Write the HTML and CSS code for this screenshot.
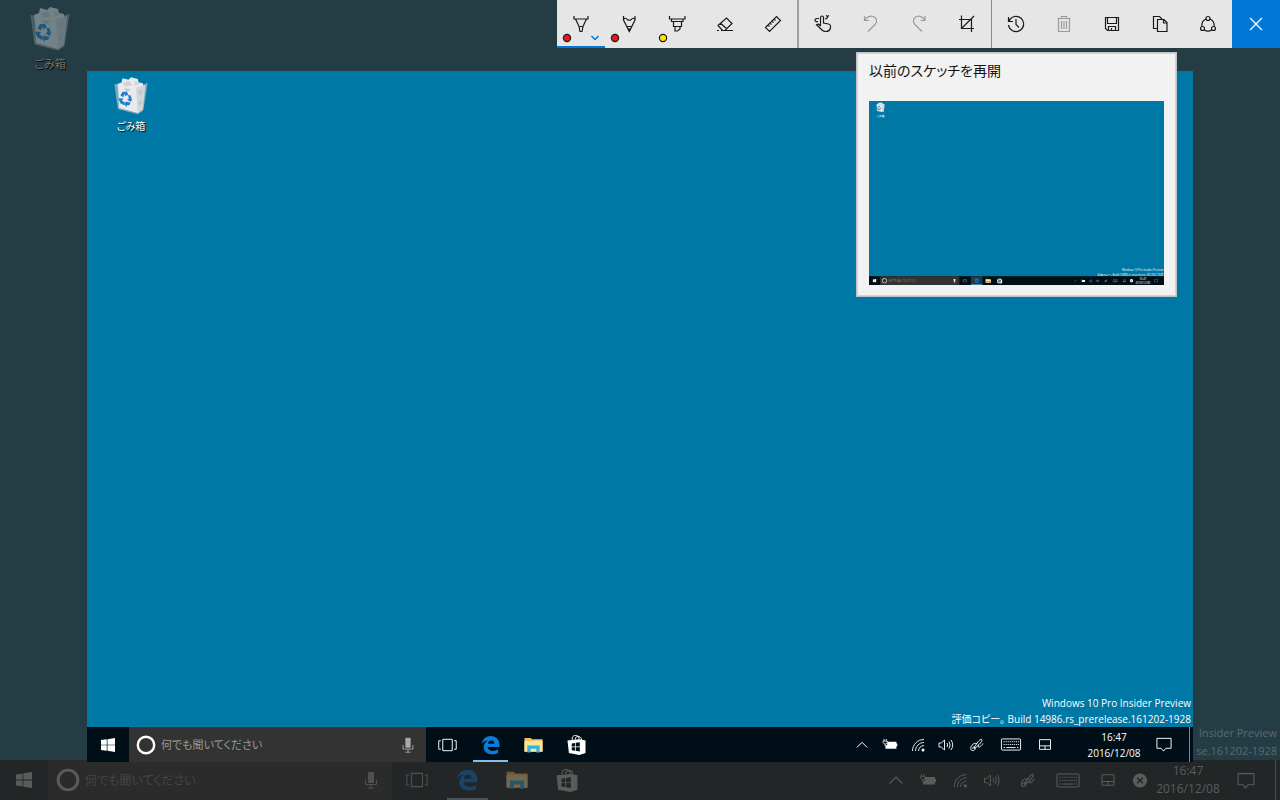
FILE: index.html
```
<!DOCTYPE html>
<html lang="ja">
<head>
    <meta charset="utf-8">
    <title>画面スケッチ</title>
    <link rel="stylesheet" href="styles.css">
</head>
<body>
    <!-- shared icons -->
    <svg class="defs" aria-hidden="true">
        <symbol id="bin" viewBox="0 0 40 46">
            <path d="M1 9 L26 12 L39 8 L34 40 L28 44 L5 38Z" fill="#d5dde2" fill-opacity=".5"/>
            <path d="M5 16 L4 9 L9 7 L10 2 L17 4 L20 1 L28 3 L29 7 L34 8 L35 20 L33 39 L28 43 L6 37Z" fill="#e8eaeb"/>
            <path d="M26 13 L37 10 L34 39 L28 43Z" fill="#d3d7d9"/>
            <path d="M10 8 L17 5 L22 10 L14 12Z M24 5 L30 8 L25 11Z" fill="#cfd4d6"/>
            <path d="M28 18 L34 14 L32 23Z M28 31 L33 27 L31 35Z M12 14 L20 15 L15 19Z" fill="#c3c8cb"/>
            <path d="M1 9 L5 38 L28 44 L34 40 L39 8" fill="none" stroke="#a9bcc5" stroke-width=".7"/>
            <path d="M7.5 22.5 L10 18 L15 18 L17 21.5 L13.5 23 L12 21 L11 24.5Z M16.5 22 L19.5 22 L21 27 L20 30 L15.5 27.5 L17.5 26Z M5 25.5 L11 26 L9.5 28.5 L13 30.5 L12 34 L7.5 31.5Z M14 29.5 L19.5 31 L18 34 L15 34 L14.5 36 L12.5 33Z" fill="#1c7fd0"/>
        </symbol>
        <symbol id="win" viewBox="0 0 16 16">
            <path d="M0 2.4 L6.6 1.4 V7.6 H0Z M7.4 1.3 L16 0 V7.6 H7.4Z M0 8.4 H6.6 V14.6 L0 13.6Z M7.4 8.4 H16 V16 L7.4 14.7Z" fill="currentColor"/>
        </symbol>
        <symbol id="cortana" viewBox="0 0 20 20">
            <circle cx="10" cy="10" r="8.2" fill="none" stroke="currentColor" stroke-width="2.4"/>
        </symbol>
        <symbol id="mic" viewBox="0 0 16 20">
            <rect x="5" y="2" width="6" height="11" rx="1" fill="currentColor"/>
            <path d="M2.5 10 V14.5 H13.5 V10 M8 14.5 V18 M5 18 H11" fill="none" stroke="currentColor"/>
        </symbol>
        <symbol id="taskview" viewBox="0 0 20 16">
            <path d="M5 2 H15 V14 H5Z M3 3.5 H.8 V12.5 H3 M17 3.5 H19.2 V12.5 H17" fill="none" stroke="currentColor"/>
        </symbol>
        <symbol id="edge" viewBox="0 0 20 20">
            <path d="M.8 8.8 C1.6 3.6 5.5 .6 10.2 .6 C16 .6 19.4 4.6 19.4 9.8 V12 H7 C7.2 15 9.6 16.2 12.4 16.2 C14.6 16.2 16.5 15.6 18 14.7 V18.4 C16.3 19.2 14.3 19.7 11.8 19.7 C6.3 19.7 2.9 16.5 2.9 12 C2.9 9 4.5 6.6 7.3 5.2 C4.6 5.3 2.3 6.6 .8 8.8Z M7.2 8.6 H14 C14 6.4 12.8 5.3 10.7 5.3 C8.8 5.3 7.5 6.7 7.2 8.6Z" fill="#0b7bdc" fill-rule="evenodd"/>
        </symbol>
        <symbol id="folder" viewBox="0 0 20 17">
            <path d="M.5 1 H7 L8.5 2.5 H19.5 V15.5 H.5Z" fill="#f2c04e"/>
            <path d="M.5 4 H19.5 V15.5 H.5Z" fill="#fde59a"/>
            <path d="M3.5 9 H16.5 V16.5 H13 V12.5 H7 V16.5 H3.5Z" fill="#37b0e3"/>
        </symbol>
        <symbol id="store" viewBox="0 0 20 22">
            <path d="M5.5 6 C5 2 7 .8 9.3 1 C12 1.2 12.8 3.5 12.8 5.5 M8.5 5.5 C8.8 2.5 10.5 1.6 12.5 2 C14.5 2.4 15.3 4 15.3 6" fill="none" stroke="currentColor"/>
            <path d="M.5 6.3 L13 5 L19.5 6.3 V19.5 L13 21.5 L2 19.5Z" fill="currentColor"/>
            <path d="M5 9.3 L8.4 8.8 V12.5 H5Z M9.2 8.7 L13.5 8.1 V12.5 H9.2Z M5 13.3 H8.4 V17 L5 16.5Z M9.2 13.3 H13.5 V17.8 L9.2 17.1Z" class="cut"/>
        </symbol>
        <symbol id="up" viewBox="0 0 12 12">
            <path d="M.8 8.5 L6 3.3 L11.2 8.5" fill="none" stroke="currentColor"/>
        </symbol>
        <symbol id="battery" viewBox="0 0 16 12">
            <path d="M5 3 H15 V5 H16 V8 H15 V10.5 H3 V7.5 L5 6Z" fill="currentColor"/>
            <path d="M1.5 0 V2 M4 0 V2 M.5 2.3 H5 V4 L3.5 5.5 H2 L.5 4Z M2.7 5.5 V8" fill="none" stroke="currentColor" stroke-width=".9"/>
        </symbol>
        <symbol id="wifi" viewBox="0 0 14 14">
            <path d="M1.5 13 C1.5 6.5 6.5 1.5 13 1.5 M4.5 13 C4.5 8.3 8.3 4.5 13 4.5 M7.5 13 C7.5 10 10 7.5 13 7.5" fill="none" stroke="currentColor" stroke-width=".9"/>
            <circle cx="12" cy="12" r="1.5" fill="currentColor"/>
        </symbol>
        <symbol id="volume" viewBox="0 0 16 14">
            <path d="M1 5 H3.2 L6.5 2 V12 L3.2 9 H1Z M9 5 Q10.3 7 9 9 M11 3.5 Q13.2 7 11 10.5 M13 2 Q16.4 7 13 12" fill="none" stroke="currentColor" stroke-width=".9"/>
        </symbol>
        <symbol id="ink" viewBox="0 0 14 14">
            <path d="M4.5 9 C7 5 9.5 1.5 11 1.3 C12.8 1.5 12 3.5 9 6.5 L5 10.3 L4 10.5Z M7 5.5 C3 4.5 .8 8 .8 10.5 C1 13.5 4.5 13 5 11 C5.5 8.5 3 8.5 2.5 10.5 M8.5 7 C8 9.5 9 10 10.3 8.5 C11.5 7 12.5 6 13.2 5.8" fill="none" stroke="currentColor"/>
        </symbol>
        <symbol id="keyboard" viewBox="0 0 22 14">
            <rect x=".7" y="1" width="20.6" height="12" rx="1" fill="none" stroke="currentColor"/>
            <path d="M3 4 H19.5 M3 7 H19.5" fill="none" stroke="currentColor" stroke-dasharray="1.2 1"/>
            <path d="M3 10.3 H4.5 M6 10.3 H16 M17.5 10.3 H19" fill="none" stroke="currentColor"/>
        </symbol>
        <symbol id="touchpad" viewBox="0 0 14 12">
            <path d="M1 .7 H13 V11.3 H1Z M1 7.5 H13 M7 7.5 V11.3" fill="none" stroke="currentColor"/>
        </symbol>
        <symbol id="offline" viewBox="0 0 16 16">
            <circle cx="8" cy="8" r="7.5" fill="currentColor"/>
            <path d="M5 5 L11 11 M11 5 L5 11" class="cross" stroke-width="1.5"/>
        </symbol>
        <symbol id="notice" viewBox="0 0 18 18">
            <path d="M1.5 2.5 H16.5 V13 H11 L8.5 16 L6 13 H1.5Z" fill="none" stroke="currentColor"/>
        </symbol>
    </svg>

    <!-- the dimmed desktop behind the sketch -->
    <div class="desktop dim">
        <div class="wall">
            <div class="shortcut">
                <svg class="bin"><use href="#bin"/></svg>
                <span>ごみ箱</span>
            </div>
            <p class="build">Insider Preview<br>se.161202-1928</p>
        </div>
        <div class="taskbar">
            <button class="start" aria-label="スタート"><svg><use href="#win"/></svg></button>
            <div class="search">
                <svg class="ring"><use href="#cortana"/></svg>
                <input type="text" placeholder="何でも聞いてください" aria-label="検索">
                <svg class="mic"><use href="#mic"/></svg>
            </div>
            <button class="task" aria-label="タスク ビュー"><svg><use href="#taskview"/></svg></button>
            <button class="task running" aria-label="Microsoft Edge"><svg><use href="#edge"/></svg></button>
            <button class="task" aria-label="エクスプローラー"><svg><use href="#folder"/></svg></button>
            <button class="task" aria-label="ストア"><svg class="store"><use href="#store"/></svg></button>
            <div class="tray">
                <svg class="up"><use href="#up"/></svg>
                <svg class="battery"><use href="#battery"/></svg>
                <svg><use href="#wifi"/></svg>
                <svg><use href="#volume"/></svg>
                <svg class="wide"><use href="#ink"/></svg>
                <svg class="wide keys"><use href="#keyboard"/></svg>
                <svg class="wide pad"><use href="#touchpad"/></svg>
                <svg class="offline"><use href="#offline"/></svg>
                <div class="clock">16:47<br>2016/12/08</div>
                <svg class="notice"><use href="#notice"/></svg>
                <div class="peek"></div>
            </div>
        </div>
    </div>

    <!-- sketch canvas -->
    <div class="desktop canvas">
        <div class="wall">
            <div class="shortcut">
                <svg class="bin"><use href="#bin"/></svg>
                <span>ごみ箱</span>
            </div>
            <p class="build">Windows 10 Pro Insider Preview<br>評価コピー。 Build 14986.rs_prerelease.161202-1928</p>
        </div>
        <div class="taskbar">
            <button class="start" aria-label="スタート"><svg><use href="#win"/></svg></button>
            <div class="search">
                <svg class="ring"><use href="#cortana"/></svg>
                <input type="text" placeholder="何でも聞いてください" aria-label="検索">
                <svg class="mic"><use href="#mic"/></svg>
            </div>
            <button class="task" aria-label="タスク ビュー"><svg><use href="#taskview"/></svg></button>
            <button class="task running" aria-label="Microsoft Edge"><svg><use href="#edge"/></svg></button>
            <button class="task" aria-label="エクスプローラー"><svg><use href="#folder"/></svg></button>
            <button class="task" aria-label="ストア"><svg class="store"><use href="#store"/></svg></button>
            <div class="tray">
                <svg class="up"><use href="#up"/></svg>
                <svg class="battery"><use href="#battery"/></svg>
                <svg><use href="#wifi"/></svg>
                <svg><use href="#volume"/></svg>
                <svg class="wide"><use href="#ink"/></svg>
                <svg class="wide keys"><use href="#keyboard"/></svg>
                <svg class="wide pad"><use href="#touchpad"/></svg>
                <div class="clock">16:47<br>2016/12/08</div>
                <svg class="notice"><use href="#notice"/></svg>
                <div class="peek"></div>
            </div>
        </div>
    </div>

    <div class="toolbar">
        <button class="tool active" aria-label="ボールペン">
            <svg viewBox="0 0 48 48">
                <path d="M17 16 V19 H31 V16 M18.5 19 L22 26.5 H26 L29.5 19 M22 26.5 L23 31.5 H25 L26 26.5"/>
                <circle class="red" cx="10" cy="38" r="3.6"/>
                <path class="more" d="M34.5 36 L38 39.5 L41.5 36"/>
            </svg>
        </button>
        <button class="tool" aria-label="鉛筆">
            <svg viewBox="0 0 48 48">
                <path d="M18.5 16 V20 L24.3 31.5 L30 20 V16 M18.5 19.5 Q20.5 17 22.3 19.5 Q24.3 21 26.3 19.5 Q28 17 30 19.5 M22 26.5 H26.6"/>
                <path d="M23.3 29 H25.3 L24.3 31Z" class="solid"/>
                <circle class="red" cx="10" cy="38" r="3.6"/>
            </svg>
        </button>
        <button class="tool" aria-label="蛍光ペン">
            <svg viewBox="0 0 48 48">
                <path d="M16.5 16 V19 H32 V16 M18.5 19 V21.5 H30 V19 M20.5 21.5 V26.5 H28.5 V21.5 M22 26.5 V31 H24.5 L27 29 V26.5"/>
                <circle class="yellow" cx="10" cy="38" r="3.6"/>
            </svg>
        </button>
        <button class="tool" aria-label="消しゴム">
            <svg viewBox="0 0 48 48"><path d="M17 25.5 L25.5 18 L31 23.5 L24 30.5 H21.5Z M19.5 23.3 L26 29 M16 30.5 H18 M20 30.5 H32"/></svg>
        </button>
        <button class="tool" aria-label="定規">
            <svg viewBox="0 0 48 48"><path d="M16.5 27.5 L27.5 16.5 L31.5 20.5 L20.5 31.5Z M19 25 L20.5 26.5 M21 23 L22.5 24.5 M23 21 L24.5 22.5 M25 19 L26.5 20.5"/></svg>
        </button>
        <span class="line thick"></span>
        <button class="tool" aria-label="タッチによる手書き">
            <svg viewBox="0 0 48 48"><path d="M21.5 26 V17.5 Q21.5 16 23 16 Q24.5 16 24.5 17.5 V23 L29.5 24 Q31.5 24.5 31.5 26 V28 Q30.5 31.5 27 31.5 Q24.5 31.5 23 30 L17.5 24.8 Q19 23.5 20 24.5 L21.5 26 M19 21.5 C15.5 22.5 15 18.5 18 18.5 H20 M26 18.5 C28 19.5 28.5 17.5 28.5 16.5 M30 15.5 L28.5 16.5 L27 15.5"/></svg>
        </button>
        <button class="tool" aria-label="元に戻す" disabled>
            <svg viewBox="0 0 48 48"><path d="M17.5 16 V20.5 H22 M17.5 20.5 C20 16 25 15 28 17.5 C30.5 19.7 29.8 22.8 28 24.5 L21 31.5"/></svg>
        </button>
        <button class="tool" aria-label="やり直し" disabled>
            <svg viewBox="0 0 48 48"><path d="M30 16 V20.5 H25.5 M30 20.5 C27.5 16 23 15 20 17.5 C17.5 19.7 18.2 22.8 20 24.5 L27 31.5"/></svg>
        </button>
        <button class="tool" aria-label="トリミング">
            <svg viewBox="0 0 48 48"><path d="M18.5 15.5 V28.5 H31 M16 19.5 H28.5 V32 M18.5 28.5 L31 16"/></svg>
        </button>
        <span class="line"></span>
        <button class="tool" aria-label="以前のスケッチを再開">
            <svg viewBox="0 0 48 48"><path d="M16.5 17 V21.5 H21 M17 21 A7.6 7.6 0 1 1 16.5 25 M24 19 V24.5 L27 27.5"/></svg>
        </button>
        <button class="tool" aria-label="すべて消去" disabled>
            <svg viewBox="0 0 48 48"><path d="M17.5 18.5 H30.5 M21.5 18.5 V16.5 H26.5 V18.5 M18.5 18.5 V31.5 H29.5 V18.5 M21.5 21 V29 M24 21 V29 M26.5 21 V29"/></svg>
        </button>
        <button class="tool" aria-label="名前を付けて保存">
            <svg viewBox="0 0 48 48"><path d="M17.5 17.5 H30.5 V30.5 H19.5 L17.5 28.5Z M19.5 17.5 V23.5 H28.5 V17.5 M20.5 30.5 V26.5 H27.5 V30.5 M23.5 28 V30.5"/></svg>
        </button>
        <button class="tool" aria-label="コピー">
            <svg viewBox="0 0 48 48"><path d="M21 28.5 H17.5 V16.5 H23.5 L26 19 M21.5 19.5 H28 L31 22.5 V31.5 H21.5Z M27.5 19.5 V23 H31"/></svg>
        </button>
        <button class="tool" aria-label="共有">
            <svg viewBox="0 0 48 48"><circle cx="24" cy="18.5" r="2"/><circle cx="18.5" cy="28.5" r="2"/><circle cx="29.5" cy="28.5" r="2"/><path d="M22 19 Q17.5 21 17.8 26.5 M26 19 Q30.5 21 30.2 26.5 M20.3 30 Q24 32.3 27.7 30"/></svg>
        </button>
        <button class="tool close" aria-label="閉じる">
            <svg viewBox="0 0 48 48"><path d="M18 18 L30 30 M30 18 L18 30"/></svg>
        </button>
    </div>

    <div class="resume">
        <h1>以前のスケッチを再開</h1>
        <svg class="thumb" viewBox="0 0 1280 800">
            <rect width="1280" height="800" fill="#0078a5"/>
            <use href="#bin" x="30" y="5" width="40" height="46"/>
            <text x="50" y="68" text-anchor="middle">ごみ箱</text>
            <text x="1276" y="738" text-anchor="end">Windows 10 Pro Insider Preview</text>
            <text x="1276" y="758" text-anchor="end">評価コピー。 Build 14986.rs_prerelease.161202-1928</text>
            <rect y="760" width="1280" height="40" fill="#000f17"/>
            <rect x="48" y="760" width="344" height="40" fill="#333"/>
            <rect x="442" y="760" width="50" height="40" fill="#223b48"/>
            <rect x="442" y="796" width="50" height="4" fill="#76b9ed"/>
            <use href="#win" x="16" y="772" width="16" height="16"/>
            <use href="#cortana" x="55" y="768" width="24" height="24"/>
            <text class="hint" x="85" y="785">何でも聞いてください</text>
            <use href="#mic" x="363" y="770" width="16" height="20"/>
            <use href="#taskview" x="406" y="772" width="20" height="16"/>
            <use href="#edge" x="457" y="770" width="20" height="20"/>
            <use href="#folder" x="505" y="770" width="24" height="20"/>
            <use href="#store" x="555" y="767" width="24" height="26"/>
            <use href="#up" x="890" y="774" width="12" height="12"/>
            <use href="#battery" x="920" y="773" width="18" height="14"/>
            <use href="#wifi" x="954" y="773" width="14" height="14"/>
            <use href="#volume" x="984" y="773" width="16" height="14"/>
            <use href="#ink" x="1021" y="773" width="14" height="14"/>
            <use href="#keyboard" x="1057" y="773" width="22" height="14"/>
            <use href="#touchpad" x="1101" y="774" width="14" height="12"/>
            <use href="#offline" x="1131" y="772" width="16" height="16"/>
            <text x="1188" y="776" text-anchor="middle">16:47</text>
            <text x="1188" y="795" text-anchor="middle">2016/12/08</text>
            <use href="#notice" x="1237" y="771" width="18" height="18"/>
        </svg>
    </div>
</body>
</html>
```
FILE: styles.css
```
* {
    box-sizing: border-box;
}
body {
    margin: 0;
    min-height: 100vh;
    position: relative;
    overflow: hidden;
    font-family: "Open Sans", "Noto Sans CJK JP", sans-serif;
    font-feature-settings: "palt";
    background: #243c44;
}
button {
    border: 0;
    padding: 0;
    background: none;
    color: inherit;
}
.defs {
    position: absolute;
    width: 0;
    height: 0;
}

/* desktops */
.desktop {
    --cell: 28px;
    --cell-wide: 34px;
    --ink: #fff;
    --bar: #000f17;
    display: flex;
    flex-direction: column;
    color: var(--ink);
}
.cut {
    fill: var(--bar, #000f17);
}
.cross {
    stroke: var(--bar, #000f17);
}
.dim {
    --cell: 32px;
    --cell-wide: 40px;
    --ink: #5a5c5c;
    --bar: #232627;
    height: 100vh;
}
/* the canvas floats over the dimmed desktop */
.canvas {
    position: absolute;
    top: 71px;
    right: 87px;
    bottom: 38px;
    left: 87px;
}
.wall {
    flex: 1;
    display: flex;
    flex-direction: column;
    justify-content: space-between;
    background: #0078a5;
}
.dim .wall {
    background: #243c44;
    color: #5b6a70;
}
.shortcut {
    width: 88px;
    padding-top: 5px;
    display: flex;
    flex-direction: column;
    align-items: center;
    font-size: 10px;
    line-height: 16px;
    text-shadow: 1px 1px 1px #000;
}
.shortcut .bin {
    width: 34px;
    height: 40px;
    margin-bottom: 2px;
}
.dim .shortcut {
    width: 100px;
    padding-top: 6px;
    font-size: 11px;
    line-height: 18px;
    color: #72706d;
}
.dim .shortcut .bin {
    width: 40px;
    height: 46px;
    margin-bottom: 3px;
    opacity: .4;
}
.build {
    margin: 0;
    padding-right: 2px;
    text-align: right;
    font-size: 10px;
    line-height: 16px;
}
.dim .build {
    padding-right: 3px;
    font-size: 11px;
    line-height: 18px;
}

/* taskbars */
.taskbar {
    height: 35px;
    display: flex;
    align-items: stretch;
    background: var(--bar);
}
.dim .taskbar {
    height: 40px;
}
.start {
    width: 42px;
    display: grid;
    place-items: center;
}
.start svg {
    width: 14px;
    height: 14px;
}
.dim .start {
    width: 48px;
}
.dim .start svg {
    width: 16px;
    height: 16px;
}
.search {
    width: 297px;
    padding: 0 10px 0 7px;
    display: flex;
    align-items: center;
    background: #333;
}
.dim .search {
    width: 344px;
    padding: 0 13px 0 8px;
    background: #2b2b2b;
}
.search input {
    flex: 1;
    min-width: 0;
    border: 0;
    padding: 0 0 0 5px;
    background: none;
    font-family: inherit;
    font-feature-settings: inherit;
    font-size: 11px;
    color: #fff;
}
.search input::placeholder {
    color: #9a9a9a;
}
.dim .search input {
    font-size: 12px;
}
.dim .search input::placeholder {
    color: #454545;
}
.search .ring {
    width: 20px;
    height: 20px;
}
.dim .search .ring {
    width: 24px;
    height: 24px;
}
.search .mic {
    width: 16px;
    height: 18px;
    color: #a8a8a8;
}
.dim .search .mic {
    height: 20px;
    color: #505050;
}
.task {
    width: 43px;
    display: grid;
    place-items: center;
}
.task svg {
    width: 19px;
    height: 20px;
}
.task .store {
    height: 22px;
}
.dim .task {
    width: 50px;
}
.dim .task svg {
    width: 22px;
    height: 22px;
    opacity: .8;
}
.dim .task .store {
    height: 25px;
    opacity: 1;
}
.dim .running svg, .dim .task:nth-of-type(4) svg {
    opacity: .35;
}
.running {
    background: linear-gradient(#83bdea, #83bdea) center bottom / 35px 2px no-repeat;
}
.dim .running {
    background: linear-gradient(#4a535c, #4a535c) center bottom / 41px 2px no-repeat;
}
.tray {
    margin-left: auto;
    display: flex;
    align-items: center;
}
.tray svg {
    width: var(--cell);
    height: 14px;
}
.tray .up {
    height: 12px;
}
.tray .battery {
    height: 11px;
}
.tray .wide {
    width: var(--cell-wide);
}
.tray .keys {
    height: 13px;
}
.tray .pad {
    height: 11px;
}
.dim .tray svg {
    height: 15px;
}
.dim .tray .battery, .dim .tray .pad {
    height: 12px;
}
.dim .tray .offline {
    width: 24px;
}
.clock {
    width: 66px;
    margin-left: 19px;
    text-align: center;
    font-size: 10px;
    line-height: 16px;
}
.dim .clock {
    width: 72px;
    margin-left: 0;
    font-size: 12px;
    line-height: 18px;
}
.tray .notice {
    width: 34px;
    height: 17px;
}
.dim .tray .notice {
    width: 44px;
    height: 19px;
}
.peek {
    width: 12px;
    align-self: stretch;
    background: linear-gradient(#7d8589, #7d8589) 8px 0 / 1px 100% no-repeat;
}
.dim .peek {
    background: linear-gradient(#494c4d, #494c4d) 7px 0 / 1px 100% no-repeat;
}

/* sketch toolbar, pinned over the top right corner */
.toolbar {
    position: absolute;
    top: 0;
    right: 0;
    display: flex;
    height: 48px;
    background: #e6e6e6;
}
.tool {
    width: 48px;
    color: #1a1a1a;
}
.tool svg {
    display: block;
    width: 48px;
    height: 48px;
    fill: none;
    stroke: currentColor;
    stroke-width: 1.2;
}
.tool:disabled {
    color: #9b9b9b;
}
.tool.active {
    box-shadow: inset 0 -2px #0078d7;
}
.tool.close {
    background: #0078d7;
    color: #fff;
}
.tool .red {
    fill: #e81a1f;
}
.tool .yellow {
    fill: #ffe600;
}
.tool .solid {
    fill: currentColor;
}
.tool .more {
    stroke: #0078d7;
    stroke-width: 1.5;
}
.line {
    width: 1px;
    background: #8a8a8a;
}
.line.thick {
    width: 2px;
    background: #a0a0a0;
}

/* resume flyout */
.resume {
    position: absolute;
    top: 52px;
    right: 103px;
    width: 321px;
    padding: 6px 12px 11px;
    border: 1px solid #bfc3c5;
    outline: 1px solid #d2d4d5;
    outline-offset: -2px;
    background: #f2f2f2;
}
.resume h1 {
    margin: 0 0 18px;
    font-size: 14px;
    font-weight: normal;
    line-height: 24px;
    color: #111;
}
.thumb {
    display: block;
    width: 100%;
    color: #fff;
}
.thumb text {
    font-size: 12px;
    fill: #fff;
}
.thumb .hint {
    font-size: 13px;
    fill: #8a8a8a;
}
```
